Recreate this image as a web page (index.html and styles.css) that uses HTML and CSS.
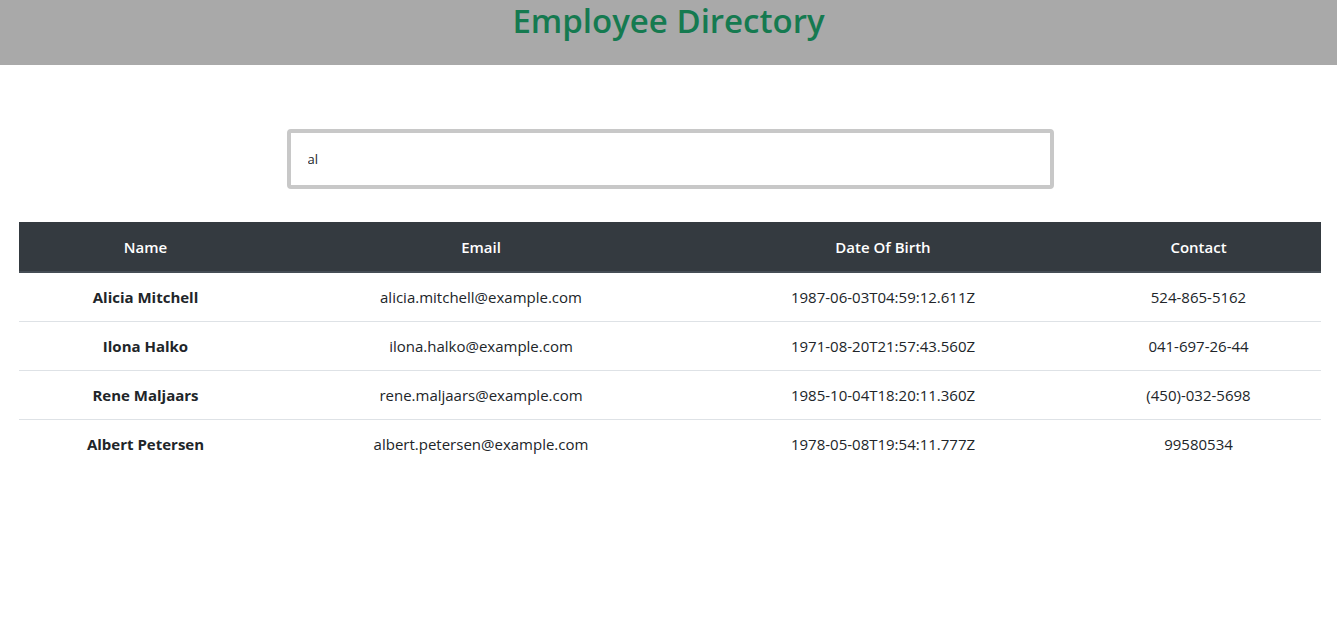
FILE: index.html
```html
<!DOCTYPE html>
<html lang="en">
<head>
<meta charset="utf-8">
<title>Employee Directory</title>
<link rel="stylesheet" href="styles.css">
</head>
<body>
<header class="top">
  <h1 class="title">Employee Directory</h1>
</header>
<main class="content">
  <div class="search-wrap">
    <input class="search" type="text" value="al">
  </div>
  <table class="directory">
    <colgroup>
      <col class="c-name"><col class="c-email"><col class="c-dob"><col class="c-contact">
    </colgroup>
    <thead>
      <tr><th>Name</th><th>Email</th><th>Date Of Birth</th><th>Contact</th></tr>
    </thead>
    <tbody>
      <tr><td class="name">Alicia Mitchell</td><td>alicia.mitchell@example.com</td><td>1987-06-03T04:59:12.611Z</td><td>524-865-5162</td></tr>
      <tr><td class="name">Ilona Halko</td><td>ilona.halko@example.com</td><td>1971-08-20T21:57:43.560Z</td><td>041-697-26-44</td></tr>
      <tr><td class="name">Rene Maljaars</td><td>rene.maljaars@example.com</td><td>1985-10-04T18:20:11.360Z</td><td>(450)-032-5698</td></tr>
      <tr><td class="name">Albert Petersen</td><td>albert.petersen@example.com</td><td>1978-05-08T19:54:11.777Z</td><td>99580534</td></tr>
    </tbody>
  </table>
</main>
</body>
</html>
```
FILE: styles.css
```css
* { box-sizing: border-box; }
html, body { margin: 0; padding: 0; background: #fff; }
body {
  font-family: "Open Sans", "Noto Sans", sans-serif;
  color: #212529;
  font-size: 15px;
}
.top {
  background: #a9a9a9;
  height: 65px;
  display: flex;
  justify-content: center;
}
.title {
  margin: 0;
  font-size: 33px;
  font-weight: 600;
  line-height: 42px;
  color: #157a50;
}
.content {
  padding: 64px 16px 0 19px;
}
.search-wrap {
  display: flex;
  justify-content: center;
}
.search {
  width: 767px;
  height: 60px;
  border: 4px solid #c8c8c8;
  border-radius: 4px;
  padding: 0 17px;
  font-family: inherit;
  font-size: 13px;
  color: #212529;
  outline: none;
}
.directory {
  margin-top: 33px;
  width: 1302px;
  border-collapse: collapse;
  table-layout: fixed;
}
.c-name { width: 253px; }
.c-email { width: 418px; }
.c-dob { width: 386px; }
.c-contact { width: 245px; }
.directory th,
.directory td {
  text-align: center;
  padding: 12px;
  line-height: 24px;
  white-space: nowrap;
}
.directory th {
  background: #343a40;
  color: #fff;
  font-weight: 600;
  border-bottom: 2px solid #454d55;
  height: 50px;
  padding-top: 11px;
  padding-bottom: 11px;
}
.directory td {
  border-top: 1px solid #dee2e6;
  height: 49px;
}
.directory tbody tr:first-child td { border-top: none; height: 48px; }
.directory td.name { font-weight: 700; }
```
